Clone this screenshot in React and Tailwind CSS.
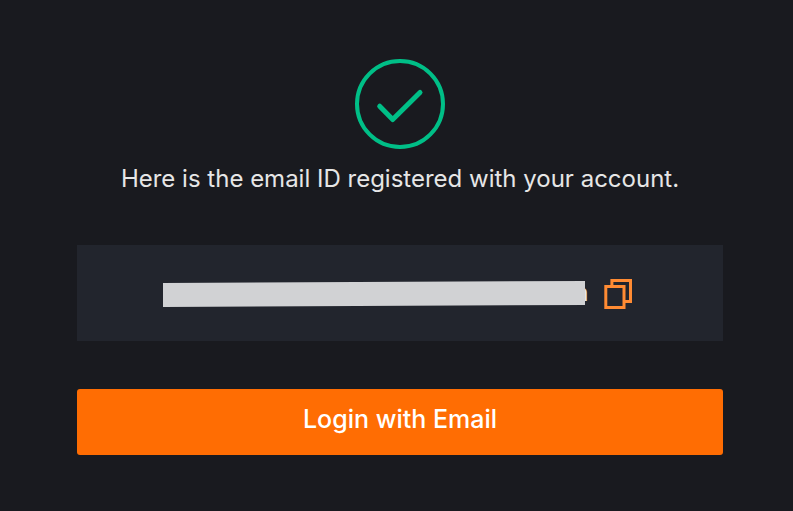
function SuccessIcon() {
  return (
    <svg width="90" height="90" viewBox="0 0 90 90" fill="none" stroke="#00bf87" strokeWidth="4" aria-hidden="true">
      <circle cx="45" cy="45" r="43" />
      <path d="M24.7 47.2 L37.7 60.5 L65 33.5" strokeWidth="5" strokeLinecap="round" strokeLinejoin="round" />
    </svg>
  );
}

function CopyIcon() {
  return (
    <svg width="28" height="32" viewBox="0 0 28 32" fill="none" stroke="#ff8b33" strokeWidth="3" aria-hidden="true">
      <path d="M7.9 9 V3.5 H26.5 V24.5 H21" />
      <rect x="1.8" y="9.5" width="18.2" height="21" />
    </svg>
  );
}

// The address stays hidden, only the end of its last letter shows past the cover
function MaskedEmail() {
  return (
    <div className="relative flex w-[426px] justify-end text-2xl leading-8 text-[#e6e6e6]">
      <span>m</span>
      <svg
        className="absolute inset-0 h-8 w-full"
        viewBox="0 0 426 32"
        preserveAspectRatio="none"
        aria-hidden="true"
      >
        <polygon points="0,6 422,4 422,28 0,30" fill="#d1d2d4" />
      </svg>
    </div>
  );
}

export default function App() {
  return (
    <main className="flex min-h-screen flex-col items-center bg-[#191a1f] pt-[59px] pr-[70px] pb-14 pl-[77px] font-['Inter',sans-serif]">
      <SuccessIcon />
      <p className="mt-[14px] text-center text-2xl leading-8 text-[#e6e6e6]">
        Here is the email ID registered with your account.
      </p>

      <div className="mt-[50px] flex h-24 w-full items-center justify-center gap-[15px] bg-[#22252d]">
        <MaskedEmail />
        <button type="button" aria-label="Copy email" className="w-[34px] cursor-pointer">
          <CopyIcon />
        </button>
      </div>

      <button
        type="button"
        className="mt-12 w-full cursor-pointer rounded-[3px] bg-[#ff6d03] pt-[14px] pb-5 text-[25px] leading-8 font-medium text-white"
      >
        Login with Email
      </button>
    </main>
  );
}
